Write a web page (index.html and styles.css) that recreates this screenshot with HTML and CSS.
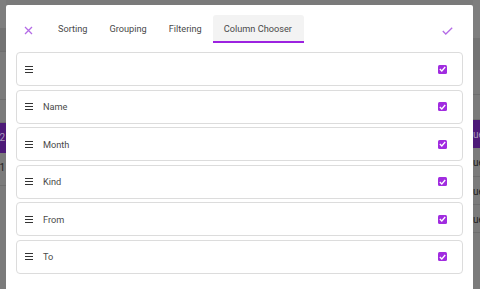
FILE: index.html
```html
<!DOCTYPE html>
<html>
<head>
<meta charset="utf-8">
<link rel="stylesheet" href="styles.css">
</head>
<body>
<div class="backdrop">
  <div class="strip strip-left">
    <div class="bg-row h28 c1"></div>
    <div class="bg-row h24 c2 line"></div>
    <div class="bg-row h48 line"></div>
    <div class="bg-row h23 line"></div>
    <div class="bg-row h30 purple"><span class="bg-text light">22</span></div>
    <div class="bg-row h33 line"><span class="bg-text">21</span></div>
    <div class="bg-row fill"></div>
  </div>
  <div class="strip strip-right">
    <div class="bg-row h38 c1"></div>
    <div class="bg-row h32 c2"></div>
    <div class="bg-row h25 line"></div>
    <div class="bg-row h25 line"></div>
    <div class="bg-row h28 purple"><span class="bg-text light">ue</span></div>
    <div class="bg-row h29 line"><span class="bg-text">ue</span></div>
    <div class="bg-row h28 line"><span class="bg-text">ue</span></div>
    <div class="bg-row h28 line"><span class="bg-text">ue</span></div>
    <div class="bg-row fill"></div>
  </div>
</div>

<div class="dialog">
  <div class="header">
    <button class="icon-btn close" aria-label="Close">
      <svg width="9" height="9" viewBox="0 0 9 9"><path d="M1 1 L8 8 M8 1 L1 8" stroke="#b46be6" stroke-width="1.3" fill="none"/></svg>
    </button>
    <div class="tabs">
      <div class="tab">Sorting</div>
      <div class="tab">Grouping</div>
      <div class="tab">Filtering</div>
      <div class="tab active">Column Chooser</div>
    </div>
    <button class="icon-btn confirm" aria-label="Apply">
      <svg width="11" height="8" viewBox="0 0 11 8"><path d="M0.8 4 L3.8 7 L10.2 0.8" stroke="#b46be6" stroke-width="1.3" fill="none"/></svg>
    </button>
  </div>
  <div class="list">
    <div class="item"><span class="handle"><i></i><i></i><i></i></span><span class="label"></span><span class="check"><svg width="7" height="6" viewBox="0 0 7 6"><path d="M0.8 3 L2.8 5 L6.2 1" stroke="#fff" stroke-width="1.3" fill="none"/></svg></span></div>
    <div class="item"><span class="handle"><i></i><i></i><i></i></span><span class="label">Name</span><span class="check"><svg width="7" height="6" viewBox="0 0 7 6"><path d="M0.8 3 L2.8 5 L6.2 1" stroke="#fff" stroke-width="1.3" fill="none"/></svg></span></div>
    <div class="item"><span class="handle"><i></i><i></i><i></i></span><span class="label">Month</span><span class="check"><svg width="7" height="6" viewBox="0 0 7 6"><path d="M0.8 3 L2.8 5 L6.2 1" stroke="#fff" stroke-width="1.3" fill="none"/></svg></span></div>
    <div class="item"><span class="handle"><i></i><i></i><i></i></span><span class="label">Kind</span><span class="check"><svg width="7" height="6" viewBox="0 0 7 6"><path d="M0.8 3 L2.8 5 L6.2 1" stroke="#fff" stroke-width="1.3" fill="none"/></svg></span></div>
    <div class="item"><span class="handle"><i></i><i></i><i></i></span><span class="label">From</span><span class="check"><svg width="7" height="6" viewBox="0 0 7 6"><path d="M0.8 3 L2.8 5 L6.2 1" stroke="#fff" stroke-width="1.3" fill="none"/></svg></span></div>
    <div class="item"><span class="handle"><i></i><i></i><i></i></span><span class="label">To</span><span class="check"><svg width="7" height="6" viewBox="0 0 7 6"><path d="M0.8 3 L2.8 5 L6.2 1" stroke="#fff" stroke-width="1.3" fill="none"/></svg></span></div>
  </div>
</div>
</body>
</html>
```

FILE: styles.css
```css
* { box-sizing: border-box; }

html, body {
  margin: 0;
  padding: 0;
  width: 480px;
  height: 289px;
  overflow: hidden;
  background: #7a7a7a;
  font-family: Roboto, "Liberation Sans", sans-serif;
}

.backdrop {
  display: flex;
  justify-content: space-between;
  height: 289px;
}

.strip {
  display: flex;
  flex-direction: column;
  overflow: hidden;
}
.strip-left { width: 6px; }
.strip-right { width: 7px; }

.bg-row {
  flex: none;
  background: #7b7b7b;
  position: relative;
  overflow: hidden;
}
.bg-row.line { border-bottom: 1px solid #6e6e6e; }
.bg-row.c1 { background: #7e7e7e; }
.bg-row.c2 { background: #737373; }
.bg-row.purple { background: #4d1a78; }
.bg-row.fill { flex: 1; }
.h23 { height: 23px; }
.h24 { height: 24px; }
.h25 { height: 25px; }
.h28 { height: 28px; }
.h29 { height: 29px; }
.h30 { height: 30px; }
.h32 { height: 32px; }
.h33 { height: 33px; }
.h38 { height: 38px; }
.h48 { height: 48px; }

.bg-text {
  display: block;
  font-size: 10px;
  line-height: 1;
  padding-top: 10px;
  color: #222;
  white-space: nowrap;
}
.strip-left .bg-text { margin-left: -6px; }
.bg-text.light { color: #a99bb8; }

.dialog {
  position: absolute;
  left: 6px;
  top: 5px;
  width: 467px;
  height: 300px;
  background: #fff;
  border-radius: 2px 2px 0 0;
}

.header {
  display: flex;
  align-items: flex-end;
  height: 38px;
  padding-top: 10px;
}

.icon-btn {
  border: 0;
  background: none;
  padding: 0;
  display: flex;
  align-items: center;
  justify-content: center;
  height: 28px;
  cursor: pointer;
}
.close {
  width: 20px;
  margin-left: 12px;
  margin-right: 9px;
  padding-top: 3px;
}
.confirm {
  width: 20px;
  margin-left: auto;
  margin-right: 16px;
  padding-top: 3px;
}

.tabs {
  display: flex;
  height: 28px;
}
.tab {
  padding: 0 11px;
  font-size: 9.2px;
  color: #4a4a4a;
  display: flex;
  align-items: center;
  height: 28px;
  border-bottom: 2px solid transparent;
  border-radius: 3px 3px 0 0;
}
.tab.active {
  background: #f3f3f3;
  border-bottom-color: #9c22e0;
  padding: 0 12px 0 11px;
}

.list {
  display: flex;
  flex-direction: column;
  gap: 3.5px;
  padding: 9px 10px 0 10px;
}

.item {
  height: 34px;
  border: 1px solid #dcdcdc;
  border-radius: 4px;
  display: flex;
  align-items: center;
  padding: 0 15px 0 8px;
}

.handle {
  width: 8px;
  display: flex;
  flex-direction: column;
  gap: 2px;
  margin-right: 10px;
}
.handle i {
  display: block;
  height: 1px;
  background: #333;
}

.label {
  font-size: 9.2px;
  color: #4a4a4a;
  flex: 1;
}

.check {
  width: 9px;
  height: 9px;
  border-radius: 1.5px;
  background: #a12ce0;
  display: flex;
  align-items: center;
  justify-content: center;
}
```
